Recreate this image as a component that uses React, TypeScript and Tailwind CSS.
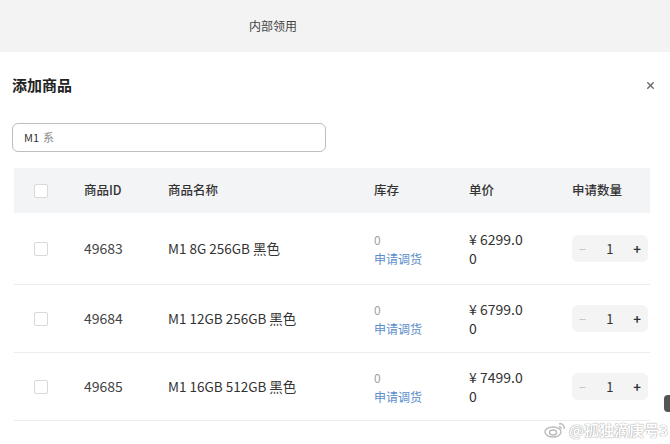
import React from 'react';
import { X } from 'lucide-react';

interface Item {
  id: string;
  name: string;
  stock: number;
  price: string;
}

const items: Item[] = [
  { id: '49683', name: 'M1 8G 256GB 黑色', stock: 0, price: '6299.0' },
  { id: '49684', name: 'M1 12GB 256GB 黑色', stock: 0, price: '6799.0' },
  { id: '49685', name: 'M1 16GB 512GB 黑色', stock: 0, price: '7499.0' },
];

const cols = 'grid grid-cols-[56px_84px_206px_95px_103px_1fr] items-center';

function Checkbox() {
  return <div className="ml-[20px] h-[14px] w-[14px] rounded-[2px] border border-[#d9d9d9] bg-white" />;
}

function Stepper() {
  return (
    <div className="ml-[14px] flex h-[27px] w-[76px] items-center justify-between rounded-md bg-[#f4f4f5] px-[7px] text-[13px]">
      <span className="text-[#c8c8c8]">−</span>
      <span className="text-[#333]">1</span>
      <span className="font-semibold text-[#333]">+</span>
    </div>
  );
}

export default function App() {
  return (
    <div className="relative h-[444px] w-[670px] overflow-hidden bg-white font-['Noto_Sans_CJK_SC','Noto_Sans',sans-serif] text-[#333]">
      {/* page header behind the dialog */}
      <div className="flex h-[52px] items-center justify-center bg-[#f3f3f4] pr-[124px] text-[12px] text-[#444]">
        内部领用
      </div>

      <div className="px-[12px] pt-[22px]">
        <div className="flex h-[22px] items-center justify-between">
          <h2 className="text-[15px] font-bold text-[#222]">添加商品</h2>
          <X className="mr-[2px] h-[11px] w-[11px] text-[#666]" strokeWidth={3} />
        </div>

        <div className="mt-[27px] flex h-[29px] w-[314px] items-center rounded-md border border-[#bdbdbd] px-[11px] text-[11px] text-[#333]">
          M1 <span className="ml-1 text-[#888]">系</span>
        </div>

        <div className="mx-[2px] mt-[16px] w-[636px]">
          <div className={`${cols} h-[45px] bg-[#f3f4f6] text-[12.5px] font-medium text-[#333]`}>
            <Checkbox />
            <div className="pl-[14px]">商品ID</div>
            <div className="pl-[14px]">商品名称</div>
            <div className="pl-[14px]">库存</div>
            <div className="pl-[14px]">单价</div>
            <div className="pl-[14px]">申请数量</div>
          </div>

          {items.map((item, i) => (
            <div
              key={item.id}
              className={`${cols} border-b border-[#ececec] ${i === 0 ? 'h-[72px]' : 'h-[68px]'}`}
            >
              <Checkbox />
              <div className="pl-[14px] text-[14px] text-[#444]">{item.id}</div>
              <div className="pl-[14px] text-[13.5px] text-[#333]">{item.name}</div>
              <div className="pl-[14px] text-[12px] leading-[19px]">
                <div className="text-[#a0a0a0]">{item.stock}</div>
                <div className="text-[#5b8ec9]">申请调货</div>
              </div>
              <div className="pl-[14px] text-[14px] leading-[19px] text-[#333]">
                <div>¥ {item.price}</div>
                <div>0</div>
              </div>
              <Stepper />
            </div>
          ))}
        </div>
      </div>

      {/* scrollbar thumb */}
      <div className="absolute right-0 top-[395px] h-[17px] w-[6px] rounded-l-sm bg-[#555]" />

      {/* watermark */}
      <div className="absolute bottom-[3px] right-[2px] flex items-center gap-[3px] text-[15px] font-bold text-white [text-shadow:0_0_1px_#999,0_0_1px_#999]">
        <svg width="22" height="16" viewBox="0 0 22 16" fill="none" stroke="#bbb" strokeWidth="1.4">
          <ellipse cx="9" cy="10" rx="8" ry="5" />
          <ellipse cx="9" cy="10.5" rx="3.5" ry="2.5" />
          <path d="M15 2a4 4 0 0 1 5 5" />
          <path d="M15 5a1.5 1.5 0 0 1 2 2" />
        </svg>
        <span>@孤独滴庚号3</span>
      </div>
    </div>
  );
}
